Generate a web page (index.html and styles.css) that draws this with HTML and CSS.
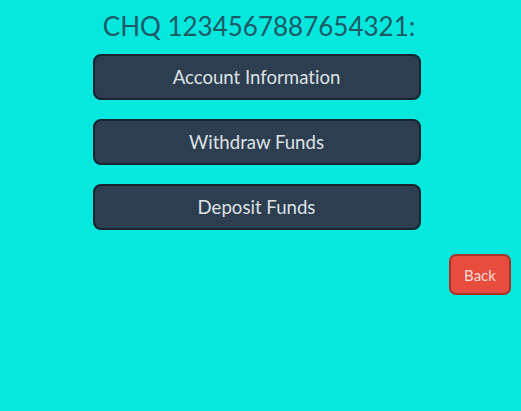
FILE: index.html
```html
<!DOCTYPE html>
<html>
<head>
<meta charset="utf-8">
<link rel="stylesheet" href="styles.css">
</head>
<body>
<div class="page">
  <h1 class="title">CHQ 1234567887654321:</h1>
  <div class="menu">
    <button class="menu-btn">Account Information</button>
    <button class="menu-btn">Withdraw Funds</button>
    <button class="menu-btn">Deposit Funds</button>
  </div>
  <div class="footer">
    <button class="back-btn">Back</button>
  </div>
</div>
</body>
</html>
```
FILE: styles.css
```css
html, body {
  margin: 0;
  padding: 0;
  background: #06e8de;
  width: 521px;
  height: 411px;
  overflow: hidden;
}
.page {
  font-family: Lato, "Open Sans", sans-serif;
  font-variant-ligatures: none;
  display: flex;
  flex-direction: column;
  align-items: center;
  padding-top: 8px;
}
.title {
  margin: 0 3px 0 0;
  font-weight: 400;
  font-size: 26px;
  line-height: 36px;
  color: #1c5a66;
}
.menu {
  margin: 10px 8px 0 0;
  display: flex;
  flex-direction: column;
  gap: 19px;
  width: 328px;
}
.menu-btn {
  height: 46px;
  background: #2c3e50;
  border: 2px solid #17232e;
  border-radius: 8px;
  color: #dfe2e5;
  font-family: Lato, "Open Sans", sans-serif;
  font-variant-ligatures: none;
  font-size: 18.6px;
  padding: 0 0 1px;
}
.footer {
  align-self: stretch;
  display: flex;
  justify-content: flex-end;
  padding-right: 10px;
  margin-top: 24px;
}
.back-btn {
  width: 62px;
  height: 41px;
  background: #e74c3c;
  border: 2px solid #a8342a;
  border-radius: 7px;
  color: #f6dcd6;
  font-family: Lato, "Open Sans", sans-serif;
  font-size: 15px;
  padding: 0;
}
```
